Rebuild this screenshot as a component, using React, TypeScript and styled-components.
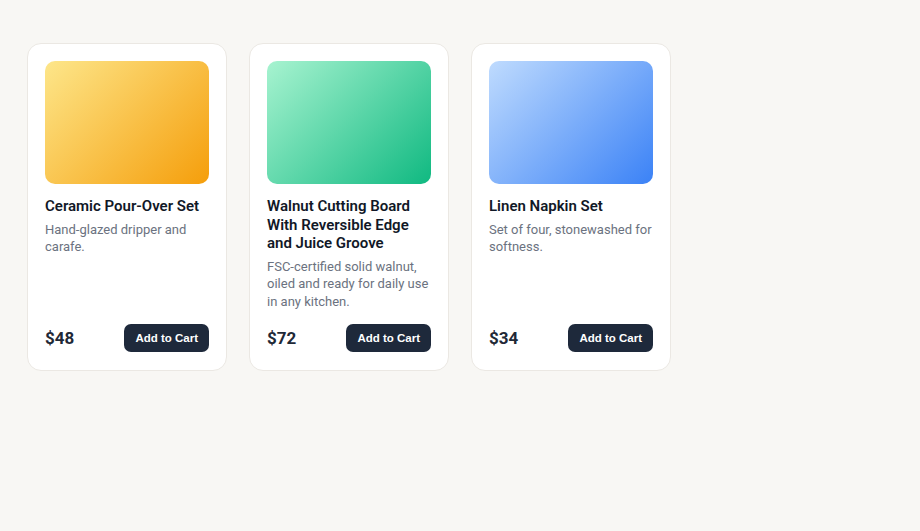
import React from 'react'
import styled, { createGlobalStyle } from 'styled-components'

const GlobalStyle = createGlobalStyle`
  html, body {
    margin: 0;
    padding: 0;
    background: #f8f7f4;
  }
  body {
    font-family: Roboto, "Noto Sans", sans-serif;
    -webkit-font-smoothing: antialiased;
  }
`

type Product = {
  id: number
  name: string
  description: string
  price: string
  from: string
  to: string
}

const products: Product[] = [
  {
    id: 1,
    name: 'Ceramic Pour-Over Set',
    description: 'Hand-glazed dripper and carafe.',
    price: '$48',
    from: '#fde68a',
    to: '#f59e0b',
  },
  {
    id: 2,
    name: 'Walnut Cutting Board With Reversible Edge and Juice Groove',
    description: 'FSC-certified solid walnut, oiled and ready for daily use in any kitchen.',
    price: '$72',
    from: '#a7f3d0',
    to: '#10b981',
  },
  {
    id: 3,
    name: 'Linen Napkin Set',
    description: 'Set of four, stonewashed for softness.',
    price: '$34',
    from: '#bfdbfe',
    to: '#3b82f6',
  },
]

export default function App() {
  return (
    <>
      <GlobalStyle />
      <Page>
        <Grid>
          {products.map((p) => (
            <Card key={p.id}>
              <Thumb $from={p.from} $to={p.to} />
              <Name>{p.name}</Name>
              <Description>{p.description}</Description>
              <Footer>
                <Price>{p.price}</Price>
                <CartButton type="button">Add to Cart</CartButton>
              </Footer>
            </Card>
          ))}
        </Grid>
      </Page>
    </>
  )
}

const Page = styled.div`
  padding: 43px 27px;
`

const Grid = styled.div`
  display: flex;
  align-items: stretch;
  gap: 22px;
`

const Card = styled.div`
  width: 200px;
  box-sizing: border-box;
  display: flex;
  flex-direction: column;
  padding: 17px 17px 18px;
  background: #ffffff;
  border: 1px solid #ebe8e3;
  border-radius: 14px;
`

const Thumb = styled.div<{ $from: string; $to: string }>`
  width: 100%;
  aspect-ratio: 4 / 3;
  border-radius: 10px;
  background: linear-gradient(135deg, ${(p) => p.$from}, ${(p) => p.$to});
`

const Name = styled.h3`
  margin: 13px 0 0;
  font-size: 15px;
  line-height: 18.5px;
  font-weight: 600;
  color: #111827;
`

const Description = styled.p`
  margin: 5px 0 14px;
  font-size: 13px;
  line-height: 17.5px;
  color: #6b7280;
`

const Footer = styled.div`
  margin-top: auto;
  display: flex;
  align-items: center;
  justify-content: space-between;
`

const Price = styled.span`
  font-size: 17px;
  font-weight: 700;
  color: #1f2937;
`

const CartButton = styled.button`
  height: 28px;
  padding: 0 11px;
  border: none;
  border-radius: 7px;
  background: #1e293b;
  color: #ffffff;
  font-family: "Liberation Sans", Arial, sans-serif;
  font-size: 11.5px;
  font-weight: 700;
  cursor: pointer;
`
